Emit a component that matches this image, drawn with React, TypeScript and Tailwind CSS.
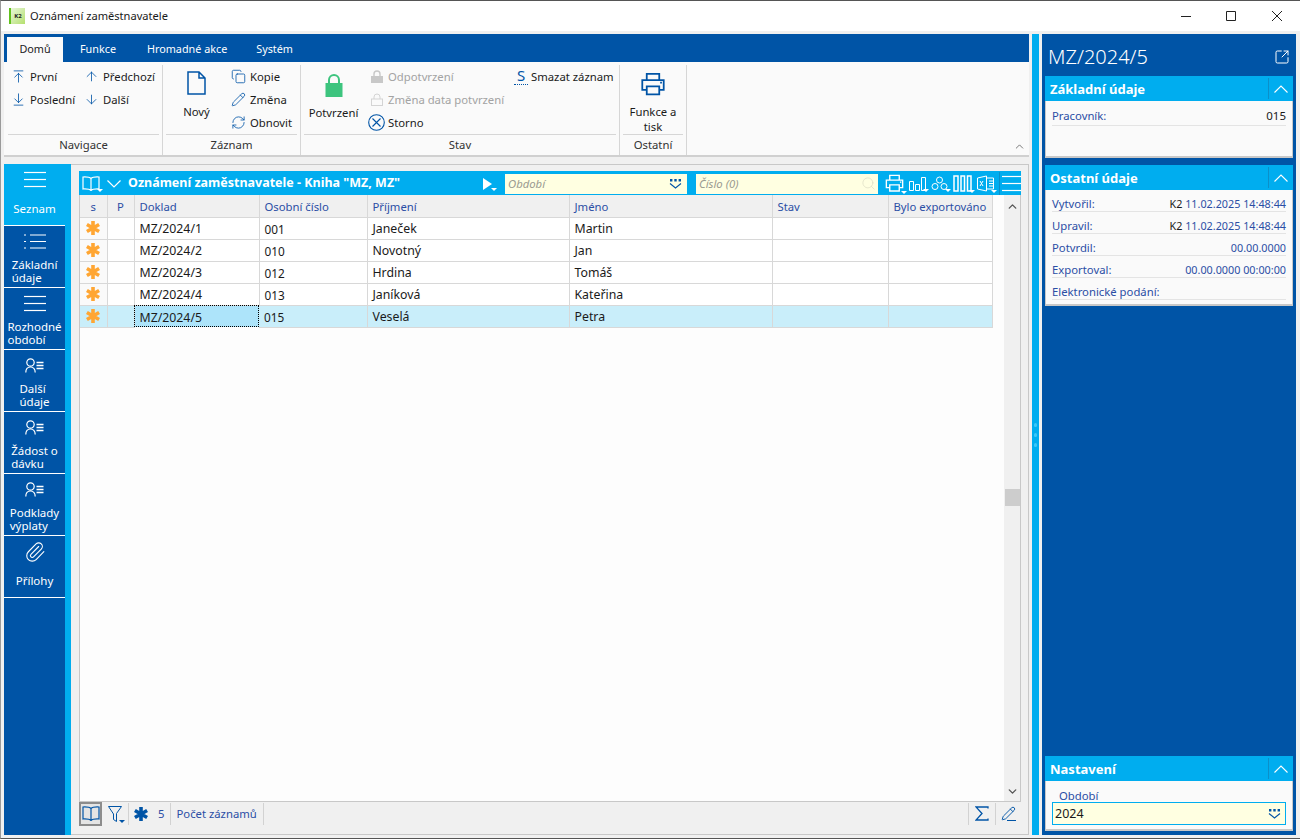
import React from 'react';
import {
  ArrowDown,
  ArrowDownToLine,
  ArrowUp,
  ArrowUpToLine,
  ChevronDown,
  ChevronUp,
  Copy,
  Paperclip,
  Pencil,
  RefreshCw,
  Search,
  SquareArrowOutUpRight,
} from 'lucide-react';

const BLUE = '#0054a6';

const rows = [
  { doklad: 'MZ/2024/1', cislo: '001', prijmeni: 'Janeček', jmeno: 'Martin' },
  { doklad: 'MZ/2024/2', cislo: '010', prijmeni: 'Novotný', jmeno: 'Jan' },
  { doklad: 'MZ/2024/3', cislo: '012', prijmeni: 'Hrdina', jmeno: 'Tomáš' },
  { doklad: 'MZ/2024/4', cislo: '013', prijmeni: 'Janíková', jmeno: 'Kateřina' },
  { doklad: 'MZ/2024/5', cislo: '015', prijmeni: 'Veselá', jmeno: 'Petra' },
];

const columns = [
  { label: 's', width: 27, center: true },
  { label: 'P', width: 27, center: true },
  { label: 'Doklad', width: 125 },
  { label: 'Osobní číslo', width: 108 },
  { label: 'Příjmení', width: 202 },
  { label: 'Jméno', width: 203 },
  { label: 'Stav', width: 116 },
  { label: 'Bylo exportováno', width: 104 },
];

// thin hamburger used in the side menu and the grid toolbar
const Lines = ({ w = 22 }: { w?: number }) => (
  <svg width={w} height={17} viewBox={`0 0 ${w} 17`} stroke="currentColor" strokeWidth="1.2">
    <path d={`M0 1.5H${w}`} />
    <path d={`M0 8.5H${w}`} />
    <path d={`M0 15.5H${w}`} />
  </svg>
);

const BulletLines = () => (
  <svg width={22} height={17} viewBox="0 0 22 17" stroke="currentColor" strokeWidth="1.2">
    <path d="M0 2h2M0 8.5h2M0 15h2M6 2h16M6 8.5h16M6 15h16" />
  </svg>
);

const PersonLines = () => (
  <svg width={19} height={15} viewBox="0 0 19 15" fill="none" stroke="currentColor" strokeWidth="1.2">
    <circle cx="5.5" cy="4.5" r="3.7" />
    <path d="M0.8 14.5c0-3.5 2-5.5 4.7-5.5s4.7 2 4.7 5.5" />
    <path d="M11.5 4.5h7M11.5 7.5h7M11.5 10.5h7" strokeWidth="1.4" />
  </svg>
);

const Star = ({ size = 16, color = '#ffa633' }: { size?: number; color?: string }) => (
  <svg width={size} height={size} viewBox="0 0 16 16" stroke={color} strokeWidth="3.6">
    <path d="M8 1v14M1.9 4.5l12.2 7M1.9 11.5l12.2-7" />
  </svg>
);

const Printer = ({ size = 26, color = BLUE }: { size?: number; color?: string }) => (
  <svg width={size} height={size} viewBox="0 0 28 28" fill="none" stroke={color} strokeWidth="2">
    <path d="M7 9V2h14v7" />
    <path d="M7 20H2V9h24v11h-5" />
    <path d="M7 16h14v9H7z" />
    <path d="M22 12h2" />
  </svg>
);

const Book = ({ color = BLUE }: { color?: string }) => (
  <svg width={18} height={15} viewBox="0 0 18 15" fill="none" stroke={color} strokeWidth="1.2">
    <path d="M9 2.5C7.5 1 5 .8 1 1v12c4-.2 6.5 0 8 1.5 1.5-1.5 4-1.7 8-1.5V1c-4-.2-6.5 0-8 1.5zM9 2.5v12" />
  </svg>
);

const DropDots = ({ color = BLUE }: { color?: string }) => (
  <svg width={13} height={11} viewBox="0 0 13 11" fill="none">
    <path d="M1 1h2.4v2.4H1zM5.3 1h2.4v2.4H5.3zM9.6 1H12v2.4H9.6z" fill={color} />
    <path d="M1 5.5l5.5 4.5L12 5.500" stroke={color} strokeWidth="1.1" />
  </svg>
);

// small white triangle under the toolbar icons
const Caret = () => <span className="absolute -bottom-[1px] -right-[3px] h-0 w-0 border-x-[3px] border-t-[3px] border-x-transparent border-t-white" />;

const ToolIcon = ({ children, className = '' }: { children: React.ReactNode; className?: string }) => (
  <span className={`relative flex items-center justify-center text-white ${className}`}>
    {children}
    <Caret />
  </span>
);

const RibbonItem = ({ icon, label, disabled }: { icon: React.ReactNode; label: string; disabled?: boolean }) => (
  <div className={`flex h-[23px] items-center gap-[4px] whitespace-nowrap ${disabled ? 'text-[#a3a3a3]' : 'text-[#1a1a1a]'}`}>
    <span className="flex w-[15px] justify-center">{icon}</span>
    {label}
  </div>
);

const RibbonGroup = ({ label, width, children, contentClass = '' }: { label: string; width: number; children: React.ReactNode; contentClass?: string }) => (
  <div className="flex flex-col border-r border-[#d6d6d6] px-[3px]" style={{ width }}>
    <div className={`flex h-[70px] border-b border-[#d6d6d6] ${contentClass}`}>{children}</div>
    <div className="flex flex-1 items-center justify-center text-[#333333]">{label}</div>
  </div>
);

const SideItem = ({ icon, label, active }: { icon: React.ReactNode; label: React.ReactNode; active?: boolean }) => (
  <div className={`flex h-[62px] flex-col items-center border-b border-white text-white ${active ? 'bg-[#00adef]' : 'bg-[#0054a6]'}`}>
    <div className="flex h-[31px] items-center">{icon}</div>
    <div className="flex flex-1 items-center pb-[1px] text-left text-[11.5px] leading-[12.5px]">{label}</div>
  </div>
);

const PanelHeader = ({ title }: { title: string }) => (
  <div className="flex h-[25px] items-center justify-between bg-[#00adef] pl-[5px] text-[13px] font-bold text-white">
    <span className="pt-[1px]">{title}</span>
    <span className="flex h-[21px] w-[25px] items-center justify-center border-l border-[#0b8fc9]">
      <svg width={14} height={8} viewBox="0 0 14 8" fill="none" stroke="currentColor" strokeWidth="1.1"><path d="M.5 7.500L7 1l6.500 6.500" /></svg>
    </span>
  </div>
);

const Field = ({ label, children, className = 'pt-[7px]' }: { label: string; children?: React.ReactNode; className?: string }) => (
  <div className={`flex h-[22px] items-center justify-between border-b border-[#e4e4e4] text-[#2b4ea5] ${className}`}>
    <span>{label}</span>
    <span className="text-[10.8px]">{children}</span>
  </div>
);

const Sep = () => <span className="block h-[22px] w-px bg-[#d2d2d2]" />;

export default function App() {
  return (
    <div
      className="flex h-[839px] w-[1300px] flex-col overflow-hidden border-y border-l border-y-[#555555] border-l-[#9a9a9a] bg-[#f0f0f0] text-[11.3px] leading-none"
      style={{ fontFamily: '"Noto Sans", sans-serif' }}
    >
      {/* title bar */}
      <div className="flex h-[30px] shrink-0 items-center bg-white pl-[8px] text-[#1a1a1a]">
        <div className="flex h-[16px] w-[16px] items-center justify-center border-l-2 border-[#62c11e] bg-gradient-to-br from-[#e8f5d8] to-[#b5e06c] text-[6px] font-bold text-[#222222]">
          K2
        </div>
        <span className="ml-[5px] flex-1 text-[11.1px]">Oznámení zaměstnavatele</span>
        <div className="flex items-center text-[#222222]">
          <svg width={10} height={10} viewBox="0 0 10 10" stroke="currentColor" className="mr-[35px]"><path d="M0 5.500h10" /></svg>
          <svg width={10} height={10} viewBox="0 0 10 10" fill="none" stroke="currentColor" className="mr-[36px]"><path d="M.5.5h9v9h-9z" /></svg>
          <svg width={10} height={10} viewBox="0 0 10 10" stroke="currentColor" className="mr-[18px]"><path d="M0 0l10 10M10 0L0 10" /></svg>
        </div>
      </div>

      <div className="flex min-h-0 flex-1 pb-[3px] pl-[3px] pt-[3px]">
        {/* main column */}
        <div className="flex w-[1025px] shrink-0 flex-col">
          {/* ribbon */}
          <div className="flex h-[28px] shrink-0 items-end bg-[#0054a6] pl-[3px] text-[10.8px] text-white">
            <div className="flex h-[25px] w-[56px] items-center justify-center bg-[#fafafa] text-[#1a1a1a]">Domů</div>
            <div className="flex h-[25px] items-center pl-[17px]">Funkce</div>
            <div className="flex h-[25px] items-center pl-[31px]">Hromadné akce</div>
            <div className="flex h-[25px] items-center pl-[29px]">Systém</div>
          </div>
          <div className="relative flex h-[95px] shrink-0 border-b-2 border-[#d0d0d0] bg-[#fafafa] pl-[1px] pt-[3px]">
            <RibbonGroup label="Navigace" width={158} contentClass="pl-[3px]">
              <div className="w-[73px]">
                <RibbonItem icon={<ArrowUpToLine size={15} color={BLUE} strokeWidth={1.3} />} label="První" />
                <RibbonItem icon={<ArrowDownToLine size={15} color={BLUE} strokeWidth={1.3} />} label="Poslední" />
              </div>
              <div>
                <RibbonItem icon={<ArrowUp size={15} color={BLUE} strokeWidth={1.3} />} label="Předchozí" />
                <RibbonItem icon={<ArrowDown size={15} color={BLUE} strokeWidth={1.3} />} label="Další" />
              </div>
            </RibbonGroup>
            <RibbonGroup label="Záznam" width={138}>
              <div className="flex w-[65px] flex-col items-center pr-[4px] pt-[6px] text-[#1a1a1a]">
                <svg width={19} height={24} viewBox="0 0 19 24" fill="none" stroke={BLUE} strokeWidth="1.5">
                  <path d="M1 1h11l6 6v16H1zM12 1v6h6" />
                </svg>
                <span className="mt-[11px]">Nový</span>
              </div>
              <div>
                <RibbonItem icon={<Copy size={15} color={BLUE} strokeWidth={1.3} />} label="Kopie" />
                <RibbonItem icon={<Pencil size={15} color={BLUE} strokeWidth={1.3} />} label="Změna" />
                <RibbonItem icon={<RefreshCw size={15} color={BLUE} strokeWidth={1.3} />} label="Obnovit" />
              </div>
            </RibbonGroup>
            <RibbonGroup label="Stav" width={319}>
              <div className="flex w-[65px] flex-col items-center pr-[6px] pt-[9px] text-[#1a1a1a]">
                <svg width={18} height={23} viewBox="0 0 18 23">
                  <path d="M4 9V6a5 5 0 0 1 10 0v3" fill="none" stroke="#3dc47e" strokeWidth="2" />
                  <rect x="0.5" y="9" width="17" height="14" fill="#3dc47e" />
                </svg>
                <span className="mt-[10px]">Potvrzení</span>
              </div>
              <div className="w-[145px]">
                <RibbonItem disabled icon={<svg width={12} height={13} viewBox="0 0 12 13"><path d="M3 6V4a3 3 0 0 1 6 0v2" fill="none" stroke="#c8c8c8" strokeWidth="1.4" /><rect y="6" width="12" height="7" fill="#c8c8c8" /></svg>} label="Odpotvrzení" />
                <RibbonItem disabled icon={<svg width={12} height={13} viewBox="0 0 12 13" fill="none" stroke="#d4d4d4"><path d="M3 6V4a3 3 0 0 1 6 0v2" /><rect x=".5" y="6" width="11" height="6.5" /></svg>} label="Změna data potvrzení" />
                <div className="-ml-[1px] flex h-[23px] items-center gap-[3px] text-[#1a1a1a]">
                  <svg width={17} height={17} viewBox="0 0 17 17" fill="none" stroke={BLUE} strokeWidth="1.1">
                    <circle cx="8.5" cy="8.5" r="7.8" />
                    <path d="M4.5 4.5l8 8M12.5 4.5l-8 8" />
                  </svg>
                  Storno
                </div>
              </div>
              <div className="flex h-[23px] items-center gap-[3px] whitespace-nowrap text-[#1a1a1a]">
                <span className="block h-[17px] w-[14px] border-b border-dotted border-[#0054a6] pb-[1px] text-center text-[15px] leading-[15px] text-[#0054a6]">S</span>
                Smazat záznam
              </div>
            </RibbonGroup>
            <RibbonGroup label="Ostatní" width={67} contentClass="flex-col items-center pt-[7px] text-center text-[#1a1a1a]">
              <Printer />
              <span className="mt-[7px] leading-[15px]">Funkce a<br />tisk</span>
            </RibbonGroup>
            <ChevronUp size={13} strokeWidth={1.3} className="absolute bottom-[2px] right-[3px] text-[#444444]" />
          </div>

          {/* workspace */}
          <div className="mt-[7px] flex min-h-0 flex-1">
            <div className="w-[61px] shrink-0 bg-[#0054a6]">
              <SideItem active icon={<Lines />} label="Seznam" />
              <SideItem icon={<BulletLines />} label={<>Základní<br />údaje</>} />
              <SideItem icon={<Lines />} label={<>Rozhodné<br />období</>} />
              <SideItem icon={<PersonLines />} label={<>Další<br />údaje</>} />
              <SideItem icon={<PersonLines />} label={<>Žádost o<br />dávku</>} />
              <SideItem icon={<PersonLines />} label={<>Podklady<br />výplaty</>} />
              <SideItem icon={<Paperclip size={22} strokeWidth={1.2} />} label="Přílohy" />
            </div>
            <div className="w-[6px] shrink-0 bg-[#00adef]" />
            <div className="flex min-w-0 flex-1 flex-col border-y border-r border-[#c8c8c8] pb-[9px] pl-[8px] pr-[7px] pt-[6px]">
              {/* grid toolbar */}
              <div className="flex h-[24px] shrink-0 items-center bg-[#00adef] pl-[3px] pt-[1px] text-white">
                <ToolIcon><Book color="#ffffff" /></ToolIcon>
                <svg width={14} height={8} viewBox="0 0 14 8" fill="none" stroke="currentColor" strokeWidth="1.2" className="ml-[7px]"><path d="M.5.5L7 7l6.500-6.500" /></svg>
                <span className="ml-[7px] w-[352px] whitespace-nowrap text-[12.5px] font-bold">Oznámení zaměstnavatele - Kniha "MZ, MZ"</span>
                <ToolIcon className="w-[14px]">
                  <span className="h-0 w-0 border-y-[6px] border-l-[9px] border-y-transparent border-l-white" />
                </ToolIcon>
                <div className="ml-[11px] flex h-[20px] w-[182px] items-center justify-between bg-[#ffffe1] pl-[3px] pr-[5px] italic text-[#9a9a90]">
                  Období
                  <DropDots />
                </div>
                <div className="ml-[9px] flex h-[20px] w-[182px] items-center justify-between bg-[#ffffe1] pl-[3px] pr-[2px] italic text-[#9a9a90]">
                  Číslo (0)
                  <Search size={15} strokeWidth={1} className="text-[#d8d8c0]" />
                </div>
                <div className="ml-[7px] flex items-center gap-[5px]">
                  <ToolIcon><Printer size={19} color="#ffffff" /></ToolIcon>
                  <ToolIcon>
                    <svg width={17} height={15} viewBox="0 0 17 15" fill="none" stroke="currentColor"><path d="M.5 5.500h4v9h-4zM6.500 8.500h4v6h-4zM12.500 1.500h4v13h-4z" /></svg>
                  </ToolIcon>
                  <ToolIcon>
                    <svg width={17} height={15} viewBox="0 0 17 15" fill="none" stroke="currentColor"><circle cx="8.5" cy="4" r="3" /><circle cx="4" cy="10.5" r="3" /><circle cx="13" cy="10.5" r="3" /></svg>
                  </ToolIcon>
                  <ToolIcon>
                    <svg width={19} height={17} viewBox="0 0 19 17" fill="none" stroke="currentColor" strokeWidth="1.5"><path d="M1 1h4v15H1zM8 1h3.500v15H8zM14.500 1h3.500v15h-3.500z" /></svg>
                  </ToolIcon>
                  <ToolIcon>
                    <svg width={17} height={17} viewBox="0 0 17 17" fill="none" stroke="currentColor"><path d="M.5 3l9-2v15l-9-2zM9.500 3h7v11h-7M12 6h4M12 8.500h4M12 11h4" /><path d="M3 6l3 5M6 6l-3 5" /></svg>
                  </ToolIcon>
                  <span className="flex h-[23px] items-center border-l border-[#0b8fc9] pl-[2px] text-white"><Lines w={19} /></span>
                </div>
              </div>

              {/* grid */}
              <div className="flex min-h-0 flex-1 border-x border-[#c8c8c8]">
                <div className="min-w-0 flex-1 bg-[#fdfdfd]">
                  <table className="w-[912px] table-fixed border-collapse">
                    <colgroup>
                      {columns.map((c) => (
                        <col key={c.label} style={{ width: c.width }} />
                      ))}
                    </colgroup>
                    <thead>
                      <tr className="h-[22px] bg-[#f0f0f0]">
                        {columns.map((c) => (
                          <th
                            key={c.label}
                            className={`border-b border-r border-[#d8d8d8] pt-[2px] font-normal text-[#2b4ea5] ${c.center ? 'text-center' : 'whitespace-nowrap pl-[5px] text-left'}`}
                          >
                            {c.label}
                          </th>
                        ))}
                      </tr>
                    </thead>
                    <tbody className="text-[12.3px] text-[#1a1a1a]">
                      {rows.map((r, i) => {
                        const selected = i === rows.length - 1;
                        const cell = 'border-b border-r border-[#d8d8d8] pl-[5px] pt-[3px]';
                        return (
                          <tr key={r.doklad} className={`h-[22px] ${selected ? 'bg-[#c9eefa]' : 'bg-white'}`}>
                            <td className={`border-b border-r border-[#d8d8d8] ${selected ? 'bg-[#c9eefa]' : 'bg-[#fafafa]'}`}>
                              <div className="flex justify-center"><Star /></div>
                            </td>
                            <td className={cell} />
                            <td className={selected ? 'bg-[#ade4fa] pl-[5px] pt-[3px] outline-1 -outline-offset-1 outline-dotted outline-black' : cell}>{r.doklad}</td>
                            <td className={`${cell} text-[11.8px]`}>{r.cislo}</td>
                            <td className={cell}>{r.prijmeni}</td>
                            <td className={cell}>{r.jmeno}</td>
                            <td className={cell} />
                            <td className={cell} />
                          </tr>
                        );
                      })}
                    </tbody>
                  </table>
                </div>
                {/* scrollbar */}
                <div className="flex w-[16px] shrink-0 flex-col items-center bg-[#f0f0f0] pt-[5px] text-[#555555]">
                  <ChevronUp size={13} strokeWidth={2.5} />
                  <div className="mt-[276px] h-[17px] w-[15px] bg-[#cdcdcd]" />
                  <div className="flex-1" />
                  <ChevronDown size={13} strokeWidth={2.5} className="mb-[3px]" />
                </div>
              </div>

              {/* status bar */}
              <div className="flex h-[24px] shrink-0 items-center border-t border-[#c8c8c8] bg-[#f0f0f0] text-[#2b4ea5]">
                <span className="flex h-[24px] w-[23px] items-center justify-center border-2 border-[#8c8c8c] bg-[#e4e4e4]"><Book /></span>
                <span className="relative ml-[5px] flex w-[16px] justify-center">
                  <svg width={14} height={16} viewBox="0 0 14 16" fill="none" stroke={BLUE}><path d="M.5.5h13L8.500 7.500v8l-3-2v-5.500z" /></svg>
                  <span className="absolute -bottom-[1px] -right-[2px] h-0 w-0 border-x-[3px] border-t-[3px] border-x-transparent border-t-[#0054a6]" />
                </span>
                <span className="ml-[5px]"><Sep /></span>
                <span className="ml-[4px]"><Star color={BLUE} /></span>
                <span className="ml-[9px]">5</span>
                <span className="ml-[6px]"><Sep /></span>
                <span className="ml-[5px] whitespace-nowrap">Počet záznamů</span>
                <span className="ml-[6px]"><Sep /></span>
                <div className="flex-1" />
                <Sep />
                <svg width={14} height={15} viewBox="0 0 14 15" fill="none" stroke={BLUE} strokeWidth="1.3" className="mx-[6px]"><path d="M13 2.500V1H1l6 6.500L1 14h12v-1.500" /></svg>
                <Sep />
                <span className="mx-[5px] flex flex-col items-center">
                  <Pencil size={15} color={BLUE} strokeWidth={1.5} />
                  <span className="-mt-[1px] ml-[6px] h-px w-[9px] bg-[#0054a6]" />
                </span>
              </div>
            </div>
          </div>
        </div>

        {/* splitter */}
        <div className="ml-[3px] flex w-[7px] shrink-0 flex-col items-center justify-center gap-[6px] bg-[#00adef]">
          <span className="h-[4px] w-[3px] rounded-full bg-[#3cc6f7]" />
          <span className="h-[4px] w-[3px] rounded-full bg-[#3cc6f7]" />
          <span className="h-[4px] w-[3px] rounded-full bg-[#3cc6f7]" />
        </div>

        {/* detail panel */}
        <div className="ml-[3px] flex w-[254px] shrink-0 flex-col bg-[#0054a6] px-[3px] pb-[4px]">
          <div className="flex h-[42px] shrink-0 items-center justify-between pl-[3px] pr-[3px] pt-[3px] text-white">
            <span className="text-[20px] font-light">MZ/2024/5</span>
            <SquareArrowOutUpRight size={16} strokeWidth={1.5} />
          </div>
          <PanelHeader title="Základní údaje" />
          <div className="h-[57px] border-x border-b-2 border-[#c8c8c8] bg-[#fafafa] px-[6px] pt-[3px]">
            <Field label="Pracovník:" className="pt-[2px]"><span className="text-[11.5px] text-[#1a1a1a]">015</span></Field>
          </div>
          <div className="mt-[7px]">
            <PanelHeader title="Ostatní údaje" />
          </div>
          <div className="h-[116px] border-x border-b-2 border-[#c8c8c8] bg-[#fafafa] px-[6px]">
            <Field label="Vytvořil:"><span className="text-[#1a1a1a]">K2</span> 11.02.2025 14:48:44</Field>
            <Field label="Upravil:"><span className="text-[#1a1a1a]">K2</span> 11.02.2025 14:48:44</Field>
            <Field label="Potvrdil:">00.00.0000</Field>
            <Field label="Exportoval:">00.00.0000 00:00:00</Field>
            <Field label="Elektronické podání:" />
          </div>
          <div className="flex-1" />
          <PanelHeader title="Nastavení" />
          <div className="h-[50px] border-x border-b-2 border-[#c8c8c8] bg-[#fafafa] px-[6px] pt-[9px]">
            <div className="pl-[7px] text-[#2b4ea5]">Období</div>
            <div className="mt-[1px] flex h-[23px] items-center justify-between border border-[#00adef] bg-[#ffffe1] pl-[2px] pr-[4px] text-[12.5px] text-[#1a1a1a]">
              2024
              <DropDots />
            </div>
          </div>
        </div>
      </div>
    </div>
  );
}
